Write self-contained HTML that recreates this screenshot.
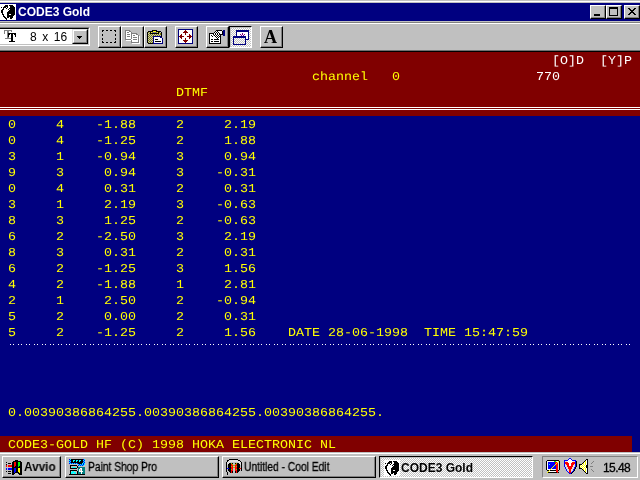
<!DOCTYPE html>
<html>
<head>
<meta charset="utf-8">
<title>CODE3 Gold</title>
<style>
html,body{margin:0;padding:0;}
body{width:640px;height:480px;overflow:hidden;background:#c0c0c0;position:relative;font-family:"Liberation Sans",sans-serif;font-size:12px;color:#000;}
.abs{position:absolute;}
#topb1{left:0;top:1px;width:640px;height:1px;background:#fff;}
#title{left:0;top:3px;width:640px;height:18px;background:#000080;}
#ticonbg{left:0;top:4px;width:16px;height:16px;background:#fff;}
#ttext{will-change:transform;left:18px;top:3px;height:18px;line-height:18px;color:#fff;font-weight:bold;font-size:12px;white-space:pre;}
.cb{position:absolute;top:5px;width:16px;height:14px;background:#c0c0c0;box-sizing:border-box;border-top:1px solid #fff;border-left:1px solid #fff;border-right:1px solid #000;border-bottom:1px solid #000;}
.cb:after{content:"";position:absolute;left:0;top:0;right:0;bottom:0;border-right:1px solid #808080;border-bottom:1px solid #808080;}
.cb i{position:absolute;background:#000;}
#l22{left:0;top:22px;width:640px;height:1px;background:#808080;}
#l23{left:0;top:23px;width:640px;height:1px;background:#fff;}
#l50{left:0;top:50px;width:640px;height:1px;background:#707070;}
#l51{left:0;top:51px;width:640px;height:1px;background:#000;}
/* combobox */
#combo{left:-2px;top:27px;width:92px;height:19px;box-sizing:border-box;background:#fff;border-top:1px solid #808080;border-left:1px solid #808080;border-right:1px solid #fff;border-bottom:1px solid #fff;}
#combo:after{content:"";position:absolute;left:0;top:0;right:0;bottom:0;border-top:1px solid #000;border-left:1px solid #000;border-right:1px solid #c0c0c0;border-bottom:1px solid #c0c0c0;}
#ctext{will-change:transform;left:30px;top:30px;height:15px;line-height:15px;font-size:12px;word-spacing:2.2px;white-space:pre;}
#cdrop{left:72px;top:29px;width:16px;height:15px;box-sizing:border-box;background:#c0c0c0;border-top:1px solid #dfdfdf;border-left:1px solid #dfdfdf;border-right:1px solid #000;border-bottom:1px solid #000;z-index:2;}
#cdrop:after{content:"";position:absolute;left:0;top:0;right:0;bottom:0;border-top:1px solid #fff;border-left:1px solid #fff;border-right:1px solid #808080;border-bottom:1px solid #808080;}
#cdrop i{position:absolute;background:#000;height:1px;}
.tb{position:absolute;top:26px;width:23px;height:22px;box-sizing:border-box;background:#c0c0c0;border-top:1px solid #fff;border-left:1px solid #fff;border-right:1px solid #000;border-bottom:1px solid #000;}
.tb:after{content:"";position:absolute;left:0;top:0;right:0;bottom:0;border-right:1px solid #808080;border-bottom:1px solid #808080;}
.tbp{position:absolute;top:26px;width:23px;height:22px;box-sizing:border-box;border-top:1px solid #000;border-left:1px solid #000;border-right:1px solid #fff;border-bottom:1px solid #fff;background:conic-gradient(#fff 25%,#c0c0c0 0 50%,#fff 0 75%,#c0c0c0 0) 0 0/2px 2px;}
.tbp:after{content:"";position:absolute;left:0;top:0;right:0;bottom:0;border-top:1px solid #c0c0c0;border-left:1px solid #c0c0c0;}
#fontA{will-change:transform;left:258.5px;top:26px;width:23px;height:22px;line-height:22px;text-align:center;font-family:"Liberation Serif",serif;font-weight:bold;font-size:18px;}
#dos{left:0;top:52px;width:640px;height:400px;background:#000080;overflow:hidden;}
.t{position:absolute;height:16px;line-height:16px;margin-top:2px;font-family:"Liberation Mono",monospace;font-size:13.33px;text-rendering:geometricPrecision;transform:scaleY(0.9);transform-origin:0 11px;white-space:pre;}
.y{color:#ffff00;}
.w{color:#ffffff;}
#dtxt{left:0;top:0;width:640px;height:400px;will-change:transform;}
#hdr{left:0;top:0;width:640px;height:64px;background:#800000;}
#dl1{left:0;top:55px;width:640px;height:1px;background:#fff;}
#dl2{left:0;top:57px;width:640px;height:1px;background:#fff;}
#dots{left:8px;top:292px;width:624px;height:1px;background:linear-gradient(90deg,transparent 0 2px,#fff 2px 3px,transparent 3px 5px,#fff 5px 6px,transparent 6px 8px) 0 0/8px 1px;}
#ftr{left:0;top:384px;width:632px;height:16px;background:#800000;}
#task{left:0;top:452px;width:640px;height:28px;background:#c0c0c0;}
#task1{left:0;top:453px;width:640px;height:1px;background:#fff;}
.btn{position:absolute;top:456px;height:22px;box-sizing:border-box;background:#c0c0c0;border-top:1px solid #fff;border-left:1px solid #fff;border-right:1px solid #000;border-bottom:1px solid #000;}
.btn:after{content:"";position:absolute;left:0;top:0;right:0;bottom:0;border-right:1px solid #808080;border-bottom:1px solid #808080;}
.btnp{position:absolute;top:456px;height:22px;box-sizing:border-box;border-top:1px solid #000;border-left:1px solid #000;border-right:1px solid #fff;border-bottom:1px solid #fff;background:conic-gradient(#fff 25%,#c0c0c0 0 50%,#fff 0 75%,#c0c0c0 0) 0 0/2px 2px;}
.btnp:after{content:"";position:absolute;left:0;top:0;right:0;bottom:0;border-top:1px solid #c0c0c0;border-left:1px solid #c0c0c0;}
.lbl{will-change:transform;position:absolute;height:22px;line-height:22px;font-size:12px;white-space:pre;transform-origin:0 50%;}
.nar{transform:scaleX(0.855);-webkit-text-stroke:0.3px #000;}
#tray{left:542px;top:456px;width:96px;height:22px;box-sizing:border-box;border-top:1px solid #808080;border-left:1px solid #808080;border-right:1px solid #fff;border-bottom:1px solid #fff;}
</style>
</head>
<body>
<div class="abs" id="topb1"></div>
<div class="abs" id="title"></div>
<div class="abs" id="ticonbg"></div>
<svg class="abs" style="left:0px;top:4px" width="16" height="16" viewBox="0 0 16 16" shape-rendering="crispEdges"><rect x="5" y="1" width="3" height="1" fill="#000"/><rect x="9" y="1" width="4" height="1" fill="#000"/><rect x="4" y="2" width="4" height="1" fill="#000"/><rect x="10" y="2" width="4" height="1" fill="#000"/><rect x="1" y="3" width="1" height="1" fill="#000"/><rect x="3" y="3" width="3" height="1" fill="#000"/><rect x="7" y="3" width="1" height="1" fill="#000"/><rect x="10" y="3" width="5" height="1" fill="#000"/><rect x="3" y="4" width="1" height="1" fill="#000"/><rect x="6" y="4" width="1" height="1" fill="#000"/><rect x="9" y="4" width="6" height="1" fill="#000"/><rect x="2" y="5" width="2" height="1" fill="#000"/><rect x="8" y="5" width="1" height="1" fill="#000"/><rect x="10" y="5" width="5" height="1" fill="#000"/><rect x="1" y="6" width="2" height="1" fill="#000"/><rect x="9" y="6" width="6" height="1" fill="#000"/><rect x="1" y="7" width="2" height="1" fill="#000"/><rect x="8" y="7" width="7" height="1" fill="#000"/><rect x="1" y="8" width="2" height="1" fill="#000"/><rect x="7" y="8" width="8" height="1" fill="#000"/><rect x="2" y="9" width="1" height="1" fill="#000"/><rect x="7" y="9" width="8" height="1" fill="#000"/><rect x="2" y="10" width="2" height="1" fill="#000"/><rect x="7" y="10" width="2" height="1" fill="#000"/><rect x="9" y="10" width="2" height="1" fill="#fff"/><rect x="11" y="10" width="4" height="1" fill="#000"/><rect x="3" y="11" width="1" height="1" fill="#000"/><rect x="7" y="11" width="7" height="1" fill="#000"/><rect x="3" y="12" width="2" height="1" fill="#000"/><rect x="7" y="12" width="6" height="1" fill="#000"/><rect x="4" y="13" width="2" height="1" fill="#000"/><rect x="7" y="13" width="2" height="1" fill="#000"/><rect x="10" y="13" width="3" height="1" fill="#000"/><rect x="5" y="14" width="2" height="1" fill="#000"/><rect x="10" y="14" width="2" height="1" fill="#000"/><rect x="6" y="15" width="1" height="1" fill="#000"/></svg>
<div class="abs" id="ttext">CODE3 Gold</div>
<div class="cb" style="left:590px"><i style="left:3px;top:8px;width:6px;height:2px"></i></div>
<div class="cb" style="left:606px"><i style="left:2px;top:1px;width:9px;height:2px"></i><i style="left:2px;top:9px;width:9px;height:1px"></i><i style="left:2px;top:1px;width:1px;height:9px"></i><i style="left:10px;top:1px;width:1px;height:9px"></i></div>
<div class="cb" style="left:624px"><svg class="abs" style="left:3px;top:2px" width="8" height="7" viewBox="0 0 8 7" shape-rendering="crispEdges"><path d="M0 0h2v1h1v1h2v-1h1v-1h2v1h-1v1h-1v1h-1v1h1v1h1v1h1v1h-2v-1h-1v-1h-2v1h-1v1h-2v-1h1v-1h1v-1h1v-1h-1v-1h-1v-1h-1z" fill="#000"/></svg></div>
<div class="abs" id="l22"></div>
<div class="abs" id="l23"></div>
<div class="abs" id="combo"></div>
<svg class="abs" style="left:4px;top:30px" width="12" height="12" viewBox="0 0 12 12" shape-rendering="crispEdges"><rect x="0" y="0" width="8" height="1" fill="#808080"/><rect x="0" y="1" width="1" height="1" fill="#808080"/><rect x="3" y="1" width="2" height="1" fill="#808080"/><rect x="7" y="1" width="1" height="1" fill="#808080"/><rect x="0" y="2" width="1" height="1" fill="#808080"/><rect x="3" y="2" width="2" height="1" fill="#808080"/><rect x="0" y="3" width="1" height="1" fill="#808080"/><rect x="3" y="3" width="1" height="1" fill="#808080"/><rect x="4" y="3" width="8" height="1" fill="#000"/><rect x="3" y="4" width="1" height="1" fill="#808080"/><rect x="4" y="4" width="2" height="1" fill="#000"/><rect x="7" y="4" width="2" height="1" fill="#000"/><rect x="10" y="4" width="2" height="1" fill="#000"/><rect x="3" y="5" width="1" height="1" fill="#808080"/><rect x="4" y="5" width="1" height="1" fill="#000"/><rect x="7" y="5" width="2" height="1" fill="#000"/><rect x="11" y="5" width="1" height="1" fill="#000"/><rect x="3" y="6" width="1" height="1" fill="#808080"/><rect x="4" y="6" width="1" height="1" fill="#000"/><rect x="7" y="6" width="2" height="1" fill="#000"/><rect x="11" y="6" width="1" height="1" fill="#000"/><rect x="3" y="7" width="2" height="1" fill="#808080"/><rect x="7" y="7" width="2" height="1" fill="#000"/><rect x="1" y="8" width="6" height="1" fill="#808080"/><rect x="7" y="8" width="2" height="1" fill="#000"/><rect x="7" y="9" width="2" height="1" fill="#000"/><rect x="7" y="10" width="2" height="1" fill="#000"/><rect x="5" y="11" width="6" height="1" fill="#000"/></svg>
<div class="abs" id="ctext">8 x 16</div>
<div class="abs" id="cdrop"><i style="left:4px;top:6px;width:5px"></i><i style="left:5px;top:7px;width:3px"></i><i style="left:6px;top:8px;width:1px"></i></div>
<div class="tb" style="left:98px"></div>
<svg class="abs" style="left:102px;top:30px" width="14" height="13" viewBox="0 0 14 13" shape-rendering="crispEdges"><path d="M0 0h2v1h-2zM4 0h2v1h-2zM8 0h2v1h-2zM12 0h2v1h-2zM0 12h2v1h-2zM4 12h2v1h-2zM8 12h2v1h-2zM12 12h2v1h-2zM0 0h1v2h-1zM0 4h1v2h-1zM0 8h1v2h-1zM0 11h1v2h-1zM13 0h1v2h-1zM13 4h1v2h-1zM13 8h1v2h-1zM13 11h1v2h-1z" fill="#000"/></svg>
<div class="tb" style="left:121px"></div>
<svg class="abs" style="left:125px;top:30px" width="16" height="14" viewBox="0 0 16 14" shape-rendering="crispEdges"><rect x="0" y="0" width="5" height="1" fill="#808080"/><rect x="0" y="1" width="1" height="1" fill="#808080"/><rect x="1" y="1" width="3" height="1" fill="#fff"/><rect x="4" y="1" width="2" height="1" fill="#808080"/><rect x="0" y="2" width="1" height="1" fill="#808080"/><rect x="1" y="2" width="1" height="1" fill="#fff"/><rect x="2" y="2" width="2" height="1" fill="#808080"/><rect x="4" y="2" width="2" height="1" fill="#fff"/><rect x="6" y="2" width="1" height="1" fill="#808080"/><rect x="0" y="3" width="1" height="1" fill="#808080"/><rect x="1" y="3" width="5" height="1" fill="#fff"/><rect x="6" y="3" width="6" height="1" fill="#808080"/><rect x="0" y="4" width="1" height="1" fill="#808080"/><rect x="1" y="4" width="1" height="1" fill="#fff"/><rect x="2" y="4" width="3" height="1" fill="#808080"/><rect x="5" y="4" width="1" height="1" fill="#fff"/><rect x="6" y="4" width="1" height="1" fill="#808080"/><rect x="7" y="4" width="4" height="1" fill="#fff"/><rect x="11" y="4" width="2" height="1" fill="#808080"/><rect x="0" y="5" width="1" height="1" fill="#808080"/><rect x="1" y="5" width="5" height="1" fill="#fff"/><rect x="6" y="5" width="1" height="1" fill="#808080"/><rect x="7" y="5" width="1" height="1" fill="#fff"/><rect x="8" y="5" width="2" height="1" fill="#808080"/><rect x="10" y="5" width="3" height="1" fill="#fff"/><rect x="13" y="5" width="1" height="1" fill="#808080"/><rect x="0" y="6" width="1" height="1" fill="#808080"/><rect x="1" y="6" width="1" height="1" fill="#fff"/><rect x="2" y="6" width="3" height="1" fill="#808080"/><rect x="5" y="6" width="1" height="1" fill="#fff"/><rect x="6" y="6" width="1" height="1" fill="#808080"/><rect x="7" y="6" width="6" height="1" fill="#fff"/><rect x="13" y="6" width="1" height="1" fill="#808080"/><rect x="14" y="6" width="1" height="1" fill="#fff"/><rect x="0" y="7" width="1" height="1" fill="#808080"/><rect x="1" y="7" width="5" height="1" fill="#fff"/><rect x="6" y="7" width="1" height="1" fill="#808080"/><rect x="7" y="7" width="1" height="1" fill="#fff"/><rect x="8" y="7" width="4" height="1" fill="#808080"/><rect x="12" y="7" width="1" height="1" fill="#fff"/><rect x="13" y="7" width="1" height="1" fill="#808080"/><rect x="14" y="7" width="1" height="1" fill="#fff"/><rect x="0" y="8" width="1" height="1" fill="#808080"/><rect x="1" y="8" width="5" height="1" fill="#fff"/><rect x="6" y="8" width="1" height="1" fill="#808080"/><rect x="7" y="8" width="6" height="1" fill="#fff"/><rect x="13" y="8" width="1" height="1" fill="#808080"/><rect x="14" y="8" width="1" height="1" fill="#fff"/><rect x="0" y="9" width="6" height="1" fill="#808080"/><rect x="6" y="9" width="2" height="1" fill="#fff"/><rect x="8" y="9" width="4" height="1" fill="#808080"/><rect x="12" y="9" width="1" height="1" fill="#fff"/><rect x="13" y="9" width="1" height="1" fill="#808080"/><rect x="14" y="9" width="1" height="1" fill="#fff"/><rect x="1" y="10" width="5" height="1" fill="#fff"/><rect x="6" y="10" width="1" height="1" fill="#808080"/><rect x="7" y="10" width="6" height="1" fill="#fff"/><rect x="13" y="10" width="1" height="1" fill="#808080"/><rect x="14" y="10" width="1" height="1" fill="#fff"/><rect x="6" y="11" width="1" height="1" fill="#808080"/><rect x="7" y="11" width="6" height="1" fill="#fff"/><rect x="13" y="11" width="1" height="1" fill="#808080"/><rect x="14" y="11" width="1" height="1" fill="#fff"/><rect x="6" y="12" width="8" height="1" fill="#808080"/><rect x="14" y="12" width="1" height="1" fill="#fff"/><rect x="7" y="13" width="8" height="1" fill="#fff"/></svg>
<div class="tb" style="left:144px"></div>
<svg class="abs" style="left:147px;top:30px" width="16" height="14" viewBox="0 0 16 14" shape-rendering="crispEdges"><rect x="5" y="0" width="5" height="1" fill="#000"/><rect x="1" y="1" width="5" height="1" fill="#000"/><rect x="6" y="1" width="3" height="1" fill="#ffff00"/><rect x="9" y="1" width="5" height="1" fill="#000"/><rect x="0" y="2" width="1" height="1" fill="#000"/><rect x="1" y="2" width="1" height="1" fill="#808000"/><rect x="2" y="2" width="1" height="1" fill="#c0c0c0"/><rect x="3" y="2" width="1" height="1" fill="#000"/><rect x="4" y="2" width="1" height="1" fill="#ffff00"/><rect x="5" y="2" width="5" height="1" fill="#808080"/><rect x="10" y="2" width="1" height="1" fill="#ffff00"/><rect x="11" y="2" width="1" height="1" fill="#000"/><rect x="12" y="2" width="1" height="1" fill="#808000"/><rect x="13" y="2" width="1" height="1" fill="#c0c0c0"/><rect x="14" y="2" width="1" height="1" fill="#000"/><rect x="0" y="3" width="1" height="1" fill="#000"/><rect x="1" y="3" width="1" height="1" fill="#c0c0c0"/><rect x="2" y="3" width="1" height="1" fill="#808000"/><rect x="3" y="3" width="9" height="1" fill="#000"/><rect x="12" y="3" width="1" height="1" fill="#c0c0c0"/><rect x="13" y="3" width="1" height="1" fill="#808000"/><rect x="14" y="3" width="1" height="1" fill="#000"/><rect x="0" y="4" width="1" height="1" fill="#000"/><rect x="1" y="4" width="1" height="1" fill="#808000"/><rect x="2" y="4" width="1" height="1" fill="#c0c0c0"/><rect x="3" y="4" width="1" height="1" fill="#808000"/><rect x="4" y="4" width="1" height="1" fill="#c0c0c0"/><rect x="5" y="4" width="1" height="1" fill="#808000"/><rect x="6" y="4" width="1" height="1" fill="#c0c0c0"/><rect x="7" y="4" width="1" height="1" fill="#808000"/><rect x="8" y="4" width="1" height="1" fill="#c0c0c0"/><rect x="9" y="4" width="1" height="1" fill="#808000"/><rect x="10" y="4" width="1" height="1" fill="#c0c0c0"/><rect x="11" y="4" width="1" height="1" fill="#808000"/><rect x="12" y="4" width="1" height="1" fill="#c0c0c0"/><rect x="13" y="4" width="1" height="1" fill="#808000"/><rect x="14" y="4" width="1" height="1" fill="#000"/><rect x="0" y="5" width="1" height="1" fill="#000"/><rect x="1" y="5" width="1" height="1" fill="#c0c0c0"/><rect x="2" y="5" width="1" height="1" fill="#808000"/><rect x="3" y="5" width="1" height="1" fill="#c0c0c0"/><rect x="4" y="5" width="1" height="1" fill="#808000"/><rect x="5" y="5" width="1" height="1" fill="#c0c0c0"/><rect x="6" y="5" width="1" height="1" fill="#808000"/><rect x="7" y="5" width="1" height="1" fill="#c0c0c0"/><rect x="8" y="5" width="1" height="1" fill="#808000"/><rect x="9" y="5" width="1" height="1" fill="#c0c0c0"/><rect x="10" y="5" width="1" height="1" fill="#808000"/><rect x="11" y="5" width="1" height="1" fill="#c0c0c0"/><rect x="12" y="5" width="1" height="1" fill="#808000"/><rect x="13" y="5" width="1" height="1" fill="#c0c0c0"/><rect x="14" y="5" width="1" height="1" fill="#000"/><rect x="0" y="6" width="1" height="1" fill="#000"/><rect x="1" y="6" width="1" height="1" fill="#808000"/><rect x="2" y="6" width="1" height="1" fill="#c0c0c0"/><rect x="3" y="6" width="1" height="1" fill="#808000"/><rect x="4" y="6" width="1" height="1" fill="#c0c0c0"/><rect x="5" y="6" width="1" height="1" fill="#808000"/><rect x="6" y="6" width="8" height="1" fill="#000080"/><rect x="14" y="6" width="1" height="1" fill="#000"/><rect x="0" y="7" width="1" height="1" fill="#000"/><rect x="1" y="7" width="1" height="1" fill="#c0c0c0"/><rect x="2" y="7" width="1" height="1" fill="#808000"/><rect x="3" y="7" width="1" height="1" fill="#c0c0c0"/><rect x="4" y="7" width="1" height="1" fill="#808000"/><rect x="5" y="7" width="1" height="1" fill="#c0c0c0"/><rect x="6" y="7" width="1" height="1" fill="#000080"/><rect x="7" y="7" width="6" height="1" fill="#fff"/><rect x="13" y="7" width="2" height="1" fill="#000080"/><rect x="0" y="8" width="1" height="1" fill="#000"/><rect x="1" y="8" width="1" height="1" fill="#808000"/><rect x="2" y="8" width="1" height="1" fill="#c0c0c0"/><rect x="3" y="8" width="1" height="1" fill="#808000"/><rect x="4" y="8" width="1" height="1" fill="#c0c0c0"/><rect x="5" y="8" width="1" height="1" fill="#808000"/><rect x="6" y="8" width="1" height="1" fill="#000080"/><rect x="7" y="8" width="8" height="1" fill="#fff"/><rect x="15" y="8" width="1" height="1" fill="#000080"/><rect x="0" y="9" width="1" height="1" fill="#000"/><rect x="1" y="9" width="1" height="1" fill="#c0c0c0"/><rect x="2" y="9" width="1" height="1" fill="#808000"/><rect x="3" y="9" width="1" height="1" fill="#c0c0c0"/><rect x="4" y="9" width="1" height="1" fill="#808000"/><rect x="5" y="9" width="1" height="1" fill="#c0c0c0"/><rect x="6" y="9" width="1" height="1" fill="#000080"/><rect x="7" y="9" width="1" height="1" fill="#fff"/><rect x="8" y="9" width="3" height="1" fill="#000"/><rect x="11" y="9" width="4" height="1" fill="#fff"/><rect x="15" y="9" width="1" height="1" fill="#000080"/><rect x="0" y="10" width="1" height="1" fill="#000"/><rect x="1" y="10" width="1" height="1" fill="#808000"/><rect x="2" y="10" width="1" height="1" fill="#c0c0c0"/><rect x="3" y="10" width="1" height="1" fill="#808000"/><rect x="4" y="10" width="1" height="1" fill="#c0c0c0"/><rect x="5" y="10" width="1" height="1" fill="#808000"/><rect x="6" y="10" width="1" height="1" fill="#000080"/><rect x="7" y="10" width="8" height="1" fill="#fff"/><rect x="15" y="10" width="1" height="1" fill="#000080"/><rect x="0" y="11" width="1" height="1" fill="#000"/><rect x="1" y="11" width="1" height="1" fill="#c0c0c0"/><rect x="2" y="11" width="1" height="1" fill="#808000"/><rect x="3" y="11" width="1" height="1" fill="#c0c0c0"/><rect x="4" y="11" width="1" height="1" fill="#808000"/><rect x="5" y="11" width="1" height="1" fill="#c0c0c0"/><rect x="6" y="11" width="1" height="1" fill="#000080"/><rect x="7" y="11" width="1" height="1" fill="#fff"/><rect x="8" y="11" width="6" height="1" fill="#000"/><rect x="14" y="11" width="1" height="1" fill="#fff"/><rect x="15" y="11" width="1" height="1" fill="#000080"/><rect x="0" y="12" width="1" height="1" fill="#000"/><rect x="1" y="12" width="1" height="1" fill="#808000"/><rect x="2" y="12" width="1" height="1" fill="#c0c0c0"/><rect x="3" y="12" width="1" height="1" fill="#808000"/><rect x="4" y="12" width="1" height="1" fill="#c0c0c0"/><rect x="5" y="12" width="1" height="1" fill="#808000"/><rect x="6" y="12" width="1" height="1" fill="#000080"/><rect x="7" y="12" width="8" height="1" fill="#fff"/><rect x="15" y="12" width="1" height="1" fill="#000080"/><rect x="1" y="13" width="5" height="1" fill="#000"/><rect x="6" y="13" width="10" height="1" fill="#000080"/></svg>
<div class="tb" style="left:175px"></div>
<svg class="abs" style="left:178px;top:29px" width="15" height="15" viewBox="0 0 15 15" shape-rendering="crispEdges"><rect x="0" y="0" width="15" height="1" fill="#000080"/><rect x="0" y="1" width="1" height="1" fill="#000080"/><rect x="1" y="1" width="6" height="1" fill="#fff"/><rect x="7" y="1" width="1" height="1" fill="#800000"/><rect x="8" y="1" width="6" height="1" fill="#fff"/><rect x="14" y="1" width="1" height="1" fill="#000080"/><rect x="0" y="2" width="1" height="1" fill="#000080"/><rect x="1" y="2" width="5" height="1" fill="#fff"/><rect x="6" y="2" width="3" height="1" fill="#800000"/><rect x="9" y="2" width="5" height="1" fill="#fff"/><rect x="14" y="2" width="1" height="1" fill="#000080"/><rect x="0" y="3" width="1" height="1" fill="#000080"/><rect x="1" y="3" width="4" height="1" fill="#fff"/><rect x="5" y="3" width="5" height="1" fill="#800000"/><rect x="10" y="3" width="4" height="1" fill="#fff"/><rect x="14" y="3" width="1" height="1" fill="#000080"/><rect x="0" y="4" width="1" height="1" fill="#000080"/><rect x="1" y="4" width="6" height="1" fill="#fff"/><rect x="7" y="4" width="1" height="1" fill="#800000"/><rect x="8" y="4" width="6" height="1" fill="#fff"/><rect x="14" y="4" width="1" height="1" fill="#000080"/><rect x="0" y="5" width="1" height="1" fill="#000080"/><rect x="1" y="5" width="2" height="1" fill="#fff"/><rect x="3" y="5" width="1" height="1" fill="#800000"/><rect x="4" y="5" width="3" height="1" fill="#fff"/><rect x="7" y="5" width="1" height="1" fill="#800000"/><rect x="8" y="5" width="3" height="1" fill="#fff"/><rect x="11" y="5" width="1" height="1" fill="#800000"/><rect x="12" y="5" width="2" height="1" fill="#fff"/><rect x="14" y="5" width="1" height="1" fill="#000080"/><rect x="0" y="6" width="1" height="1" fill="#000080"/><rect x="1" y="6" width="1" height="1" fill="#fff"/><rect x="2" y="6" width="2" height="1" fill="#800000"/><rect x="4" y="6" width="7" height="1" fill="#fff"/><rect x="11" y="6" width="2" height="1" fill="#800000"/><rect x="13" y="6" width="1" height="1" fill="#fff"/><rect x="14" y="6" width="1" height="1" fill="#000080"/><rect x="0" y="7" width="1" height="1" fill="#000080"/><rect x="1" y="7" width="5" height="1" fill="#800000"/><rect x="6" y="7" width="3" height="1" fill="#fff"/><rect x="9" y="7" width="5" height="1" fill="#800000"/><rect x="14" y="7" width="1" height="1" fill="#000080"/><rect x="0" y="8" width="1" height="1" fill="#000080"/><rect x="1" y="8" width="1" height="1" fill="#fff"/><rect x="2" y="8" width="2" height="1" fill="#800000"/><rect x="4" y="8" width="7" height="1" fill="#fff"/><rect x="11" y="8" width="2" height="1" fill="#800000"/><rect x="13" y="8" width="1" height="1" fill="#fff"/><rect x="14" y="8" width="1" height="1" fill="#000080"/><rect x="0" y="9" width="1" height="1" fill="#000080"/><rect x="1" y="9" width="2" height="1" fill="#fff"/><rect x="3" y="9" width="1" height="1" fill="#800000"/><rect x="4" y="9" width="3" height="1" fill="#fff"/><rect x="7" y="9" width="1" height="1" fill="#800000"/><rect x="8" y="9" width="3" height="1" fill="#fff"/><rect x="11" y="9" width="1" height="1" fill="#800000"/><rect x="12" y="9" width="2" height="1" fill="#fff"/><rect x="14" y="9" width="1" height="1" fill="#000080"/><rect x="0" y="10" width="1" height="1" fill="#000080"/><rect x="1" y="10" width="6" height="1" fill="#fff"/><rect x="7" y="10" width="1" height="1" fill="#800000"/><rect x="8" y="10" width="6" height="1" fill="#fff"/><rect x="14" y="10" width="1" height="1" fill="#000080"/><rect x="0" y="11" width="1" height="1" fill="#000080"/><rect x="1" y="11" width="4" height="1" fill="#fff"/><rect x="5" y="11" width="5" height="1" fill="#800000"/><rect x="10" y="11" width="4" height="1" fill="#fff"/><rect x="14" y="11" width="1" height="1" fill="#000080"/><rect x="0" y="12" width="1" height="1" fill="#000080"/><rect x="1" y="12" width="5" height="1" fill="#fff"/><rect x="6" y="12" width="3" height="1" fill="#800000"/><rect x="9" y="12" width="5" height="1" fill="#fff"/><rect x="14" y="12" width="1" height="1" fill="#000080"/><rect x="0" y="13" width="1" height="1" fill="#000080"/><rect x="1" y="13" width="6" height="1" fill="#fff"/><rect x="7" y="13" width="1" height="1" fill="#800000"/><rect x="8" y="13" width="6" height="1" fill="#fff"/><rect x="14" y="13" width="1" height="1" fill="#000080"/><rect x="0" y="14" width="15" height="1" fill="#000080"/></svg>
<div class="tb" style="left:206px"></div>
<svg class="abs" style="left:209px;top:30px" width="16" height="14" viewBox="0 0 16 14" shape-rendering="crispEdges"><rect x="7" y="0" width="6" height="1" fill="#000"/><rect x="14" y="0" width="2" height="1" fill="#000080"/><rect x="6" y="1" width="1" height="1" fill="#000"/><rect x="7" y="1" width="1" height="1" fill="#fff"/><rect x="8" y="1" width="1" height="1" fill="#000"/><rect x="9" y="1" width="4" height="1" fill="#fff"/><rect x="13" y="1" width="1" height="1" fill="#000"/><rect x="14" y="1" width="2" height="1" fill="#000080"/><rect x="5" y="2" width="1" height="1" fill="#000"/><rect x="6" y="2" width="1" height="1" fill="#fff"/><rect x="7" y="2" width="1" height="1" fill="#000"/><rect x="8" y="2" width="1" height="1" fill="#fff"/><rect x="9" y="2" width="1" height="1" fill="#000"/><rect x="10" y="2" width="3" height="1" fill="#fff"/><rect x="13" y="2" width="1" height="1" fill="#000"/><rect x="14" y="2" width="2" height="1" fill="#000080"/><rect x="0" y="3" width="5" height="1" fill="#000"/><rect x="5" y="3" width="1" height="1" fill="#fff"/><rect x="6" y="3" width="1" height="1" fill="#000"/><rect x="7" y="3" width="1" height="1" fill="#fff"/><rect x="8" y="3" width="1" height="1" fill="#000"/><rect x="9" y="3" width="1" height="1" fill="#fff"/><rect x="10" y="3" width="1" height="1" fill="#000"/><rect x="11" y="3" width="2" height="1" fill="#fff"/><rect x="13" y="3" width="1" height="1" fill="#000"/><rect x="14" y="3" width="2" height="1" fill="#000080"/><rect x="0" y="4" width="1" height="1" fill="#000"/><rect x="1" y="4" width="3" height="1" fill="#fff"/><rect x="4" y="4" width="1" height="1" fill="#000"/><rect x="5" y="4" width="1" height="1" fill="#fff"/><rect x="6" y="4" width="1" height="1" fill="#000"/><rect x="7" y="4" width="1" height="1" fill="#fff"/><rect x="8" y="4" width="1" height="1" fill="#000"/><rect x="9" y="4" width="1" height="1" fill="#fff"/><rect x="10" y="4" width="4" height="1" fill="#000"/><rect x="14" y="4" width="2" height="1" fill="#000080"/><rect x="0" y="5" width="1" height="1" fill="#000"/><rect x="1" y="5" width="1" height="1" fill="#fff"/><rect x="2" y="5" width="1" height="1" fill="#000"/><rect x="3" y="5" width="1" height="1" fill="#fff"/><rect x="5" y="5" width="1" height="1" fill="#000"/><rect x="6" y="5" width="1" height="1" fill="#fff"/><rect x="7" y="5" width="1" height="1" fill="#000"/><rect x="8" y="5" width="1" height="1" fill="#fff"/><rect x="9" y="5" width="1" height="1" fill="#000"/><rect x="10" y="5" width="1" height="1" fill="#fff"/><rect x="11" y="5" width="1" height="1" fill="#000"/><rect x="14" y="5" width="2" height="1" fill="#000080"/><rect x="0" y="6" width="1" height="1" fill="#000"/><rect x="1" y="6" width="2" height="1" fill="#fff"/><rect x="3" y="6" width="1" height="1" fill="#000"/><rect x="4" y="6" width="2" height="1" fill="#fff"/><rect x="6" y="6" width="1" height="1" fill="#000"/><rect x="7" y="6" width="1" height="1" fill="#fff"/><rect x="8" y="6" width="1" height="1" fill="#000"/><rect x="9" y="6" width="1" height="1" fill="#fff"/><rect x="10" y="6" width="2" height="1" fill="#000"/><rect x="0" y="7" width="1" height="1" fill="#000"/><rect x="1" y="7" width="6" height="1" fill="#fff"/><rect x="7" y="7" width="1" height="1" fill="#000"/><rect x="8" y="7" width="1" height="1" fill="#fff"/><rect x="9" y="7" width="1" height="1" fill="#000"/><rect x="10" y="7" width="1" height="1" fill="#fff"/><rect x="11" y="7" width="1" height="1" fill="#000"/><rect x="0" y="8" width="1" height="1" fill="#000"/><rect x="1" y="8" width="7" height="1" fill="#fff"/><rect x="8" y="8" width="1" height="1" fill="#000"/><rect x="9" y="8" width="2" height="1" fill="#fff"/><rect x="11" y="8" width="1" height="1" fill="#000"/><rect x="0" y="9" width="1" height="1" fill="#000"/><rect x="1" y="9" width="1" height="1" fill="#fff"/><rect x="2" y="9" width="2" height="1" fill="#000"/><rect x="4" y="9" width="1" height="1" fill="#fff"/><rect x="5" y="9" width="5" height="1" fill="#000"/><rect x="10" y="9" width="1" height="1" fill="#fff"/><rect x="11" y="9" width="1" height="1" fill="#000"/><rect x="0" y="10" width="1" height="1" fill="#000"/><rect x="1" y="10" width="10" height="1" fill="#fff"/><rect x="11" y="10" width="1" height="1" fill="#000"/><rect x="0" y="11" width="1" height="1" fill="#000"/><rect x="1" y="11" width="1" height="1" fill="#fff"/><rect x="2" y="11" width="2" height="1" fill="#000"/><rect x="4" y="11" width="1" height="1" fill="#fff"/><rect x="5" y="11" width="5" height="1" fill="#000"/><rect x="10" y="11" width="1" height="1" fill="#fff"/><rect x="11" y="11" width="1" height="1" fill="#000"/><rect x="0" y="12" width="1" height="1" fill="#000"/><rect x="1" y="12" width="10" height="1" fill="#fff"/><rect x="11" y="12" width="1" height="1" fill="#000"/><rect x="0" y="13" width="12" height="1" fill="#000"/></svg>
<div class="tbp" style="left:229px"></div>
<svg class="abs" style="left:233px;top:30px" width="16" height="15" viewBox="0 0 16 15" shape-rendering="crispEdges"><rect x="3" y="0" width="13" height="1" fill="#000080"/><rect x="3" y="1" width="13" height="1" fill="#000080"/><rect x="3" y="2" width="1" height="1" fill="#000080"/><rect x="4" y="2" width="11" height="1" fill="#fff"/><rect x="15" y="2" width="1" height="1" fill="#000080"/><rect x="3" y="3" width="1" height="1" fill="#000080"/><rect x="4" y="3" width="5" height="1" fill="#fff"/><rect x="9" y="3" width="1" height="1" fill="#800080"/><rect x="10" y="3" width="5" height="1" fill="#fff"/><rect x="15" y="3" width="1" height="1" fill="#000080"/><rect x="3" y="4" width="1" height="1" fill="#000080"/><rect x="4" y="4" width="3" height="1" fill="#fff"/><rect x="7" y="4" width="1" height="1" fill="#800080"/><rect x="8" y="4" width="1" height="1" fill="#fff"/><rect x="9" y="4" width="1" height="1" fill="#800080"/><rect x="10" y="4" width="1" height="1" fill="#fff"/><rect x="11" y="4" width="1" height="1" fill="#800080"/><rect x="12" y="4" width="3" height="1" fill="#fff"/><rect x="15" y="4" width="1" height="1" fill="#000080"/><rect x="3" y="5" width="1" height="1" fill="#000080"/><rect x="4" y="5" width="4" height="1" fill="#fff"/><rect x="8" y="5" width="1" height="1" fill="#800080"/><rect x="9" y="5" width="1" height="1" fill="#fff"/><rect x="10" y="5" width="1" height="1" fill="#800080"/><rect x="11" y="5" width="4" height="1" fill="#fff"/><rect x="15" y="5" width="1" height="1" fill="#000080"/><rect x="0" y="6" width="13" height="1" fill="#000080"/><rect x="13" y="6" width="2" height="1" fill="#fff"/><rect x="15" y="6" width="1" height="1" fill="#000080"/><rect x="0" y="7" width="13" height="1" fill="#000080"/><rect x="13" y="7" width="2" height="1" fill="#fff"/><rect x="15" y="7" width="1" height="1" fill="#000080"/><rect x="0" y="8" width="1" height="1" fill="#000080"/><rect x="12" y="8" width="1" height="1" fill="#000080"/><rect x="13" y="8" width="2" height="1" fill="#fff"/><rect x="15" y="8" width="1" height="1" fill="#000080"/><rect x="0" y="9" width="1" height="1" fill="#000080"/><rect x="12" y="9" width="4" height="1" fill="#000080"/><rect x="0" y="10" width="1" height="1" fill="#000080"/><rect x="12" y="10" width="1" height="1" fill="#000080"/><rect x="0" y="11" width="1" height="1" fill="#000080"/><rect x="12" y="11" width="1" height="1" fill="#000080"/><rect x="0" y="12" width="1" height="1" fill="#000080"/><rect x="12" y="12" width="1" height="1" fill="#000080"/><rect x="0" y="13" width="1" height="1" fill="#000080"/><rect x="12" y="13" width="1" height="1" fill="#000080"/><rect x="0" y="14" width="13" height="1" fill="#000080"/></svg>
<div class="tb" style="left:260px"></div>
<div class="abs" id="fontA">A</div>
<div class="abs" id="l50"></div>
<div class="abs" id="l51"></div>
<div class="abs" id="dos">
<div class="abs" id="hdr"></div>
<div class="abs" id="dl1"></div>
<div class="abs" id="dl2"></div>
<div class="abs" id="dots"></div>
<div class="abs" id="ftr"></div>
<div class="abs" id="dtxt">
<div class="t w" style="left:552px;top:0px">[O]D  [Y]P</div>
<div class="t y" style="left:312px;top:16px">channel   0</div>
<div class="t w" style="left:536px;top:16px">770</div>
<div class="t y" style="left:176px;top:32px">DTMF</div>
<div class="t y" style="left:0px;top:64px"> 0     4    -1.88     2     2.19</div>
<div class="t y" style="left:0px;top:80px"> 0     4    -1.25     2     1.88</div>
<div class="t y" style="left:0px;top:96px"> 3     1    -0.94     3     0.94</div>
<div class="t y" style="left:0px;top:112px"> 9     3     0.94     3    -0.31</div>
<div class="t y" style="left:0px;top:128px"> 0     4     0.31     2     0.31</div>
<div class="t y" style="left:0px;top:144px"> 3     1     2.19     3    -0.63</div>
<div class="t y" style="left:0px;top:160px"> 8     3     1.25     2    -0.63</div>
<div class="t y" style="left:0px;top:176px"> 6     2    -2.50     3     2.19</div>
<div class="t y" style="left:0px;top:192px"> 8     3     0.31     2     0.31</div>
<div class="t y" style="left:0px;top:208px"> 6     2    -1.25     3     1.56</div>
<div class="t y" style="left:0px;top:224px"> 4     2    -1.88     1     2.81</div>
<div class="t y" style="left:0px;top:240px"> 2     1     2.50     2    -0.94</div>
<div class="t y" style="left:0px;top:256px"> 5     2     0.00     2     0.31</div>
<div class="t y" style="left:0px;top:272px"> 5     2    -1.25     2     1.56    DATE 28-06-1998  TIME 15:47:59</div>
<div class="t y" style="left:8px;top:352px">0.00390386864255.00390386864255.00390386864255.</div>
<div class="t y" style="left:8px;top:384px">CODE3-GOLD HF (C) 1998 HOKA ELECTRONIC NL</div>
</div>
</div>
<div class="abs" id="task"></div>
<div class="abs" id="task1"></div>
<div class="btn" style="left:2px;width:59px"><span class="lbl" style="left:21px;top:-1px;font-weight:bold;transform:scaleX(0.98)">Avvio</span></div>
<svg class="abs" style="left:5px;top:460px" width="17" height="15" viewBox="0 0 17 15" shape-rendering="crispEdges"><rect x="10" y="0" width="3" height="1" fill="#000"/><rect x="8" y="1" width="8" height="1" fill="#000"/><rect x="1" y="2" width="1" height="1" fill="#000"/><rect x="7" y="2" width="2" height="1" fill="#000"/><rect x="9" y="2" width="2" height="1" fill="#ff0000"/><rect x="11" y="2" width="2" height="1" fill="#000"/><rect x="13" y="2" width="2" height="1" fill="#00ff00"/><rect x="15" y="2" width="2" height="1" fill="#000"/><rect x="3" y="3" width="3" height="1" fill="#000"/><rect x="7" y="3" width="2" height="1" fill="#000"/><rect x="9" y="3" width="2" height="1" fill="#ff0000"/><rect x="11" y="3" width="2" height="1" fill="#000"/><rect x="13" y="3" width="2" height="1" fill="#00ff00"/><rect x="15" y="3" width="2" height="1" fill="#000"/><rect x="1" y="4" width="1" height="1" fill="#000"/><rect x="7" y="4" width="2" height="1" fill="#000"/><rect x="9" y="4" width="2" height="1" fill="#ff0000"/><rect x="11" y="4" width="2" height="1" fill="#000"/><rect x="13" y="4" width="2" height="1" fill="#00ff00"/><rect x="15" y="4" width="2" height="1" fill="#000"/><rect x="1" y="5" width="1" height="1" fill="#ff0000"/><rect x="3" y="5" width="4" height="1" fill="#ff0000"/><rect x="7" y="5" width="2" height="1" fill="#000"/><rect x="9" y="5" width="2" height="1" fill="#ff0000"/><rect x="11" y="5" width="2" height="1" fill="#000"/><rect x="13" y="5" width="2" height="1" fill="#00ff00"/><rect x="15" y="5" width="2" height="1" fill="#000"/><rect x="1" y="6" width="1" height="1" fill="#ff0000"/><rect x="3" y="6" width="4" height="1" fill="#ff0000"/><rect x="7" y="6" width="2" height="1" fill="#000"/><rect x="9" y="6" width="1" height="1" fill="#ff0000"/><rect x="10" y="6" width="3" height="1" fill="#000"/><rect x="13" y="6" width="1" height="1" fill="#00ff00"/><rect x="14" y="6" width="3" height="1" fill="#000"/><rect x="7" y="7" width="10" height="1" fill="#000"/><rect x="1" y="8" width="1" height="1" fill="#0000ff"/><rect x="3" y="8" width="4" height="1" fill="#0000ff"/><rect x="7" y="8" width="2" height="1" fill="#000"/><rect x="9" y="8" width="2" height="1" fill="#0000ff"/><rect x="11" y="8" width="2" height="1" fill="#000"/><rect x="13" y="8" width="2" height="1" fill="#ffff00"/><rect x="15" y="8" width="2" height="1" fill="#000"/><rect x="1" y="9" width="1" height="1" fill="#0000ff"/><rect x="3" y="9" width="4" height="1" fill="#0000ff"/><rect x="7" y="9" width="2" height="1" fill="#000"/><rect x="9" y="9" width="2" height="1" fill="#0000ff"/><rect x="11" y="9" width="2" height="1" fill="#000"/><rect x="13" y="9" width="2" height="1" fill="#ffff00"/><rect x="15" y="9" width="2" height="1" fill="#000"/><rect x="7" y="10" width="2" height="1" fill="#000"/><rect x="9" y="10" width="2" height="1" fill="#0000ff"/><rect x="11" y="10" width="2" height="1" fill="#000"/><rect x="13" y="10" width="2" height="1" fill="#ffff00"/><rect x="15" y="10" width="2" height="1" fill="#000"/><rect x="1" y="11" width="1" height="1" fill="#000"/><rect x="3" y="11" width="3" height="1" fill="#000"/><rect x="7" y="11" width="2" height="1" fill="#000"/><rect x="9" y="11" width="2" height="1" fill="#0000ff"/><rect x="11" y="11" width="2" height="1" fill="#000"/><rect x="13" y="11" width="2" height="1" fill="#ffff00"/><rect x="15" y="11" width="2" height="1" fill="#000"/><rect x="7" y="12" width="2" height="1" fill="#000"/><rect x="9" y="12" width="1" height="1" fill="#0000ff"/><rect x="10" y="12" width="4" height="1" fill="#000"/><rect x="14" y="12" width="1" height="1" fill="#ffff00"/><rect x="15" y="12" width="2" height="1" fill="#000"/><rect x="3" y="13" width="3" height="1" fill="#000"/><rect x="7" y="13" width="3" height="1" fill="#000"/><rect x="13" y="13" width="4" height="1" fill="#000"/><rect x="7" y="14" width="2" height="1" fill="#000"/><rect x="14" y="14" width="3" height="1" fill="#000"/></svg>
<div class="btn" style="left:65px;width:154px"><span class="lbl nar" style="left:22px;top:-1px">Paint Shop Pro</span></div>
<svg class="abs" style="left:69px;top:459px" width="16" height="16" viewBox="0 0 16 16" shape-rendering="crispEdges"><rect x="0" y="0" width="1" height="1" fill="#0000ff"/><rect x="1" y="0" width="1" height="1" fill="#00ffff"/><rect x="2" y="0" width="12" height="1" fill="#000"/><rect x="14" y="0" width="1" height="1" fill="#0000ff"/><rect x="15" y="0" width="1" height="1" fill="#00ffff"/><rect x="0" y="1" width="1" height="1" fill="#00ffff"/><rect x="1" y="1" width="1" height="1" fill="#0000ff"/><rect x="2" y="1" width="2" height="1" fill="#000"/><rect x="4" y="1" width="2" height="1" fill="#00ffff"/><rect x="6" y="1" width="1" height="1" fill="#000"/><rect x="7" y="1" width="2" height="1" fill="#00ffff"/><rect x="9" y="1" width="1" height="1" fill="#000"/><rect x="10" y="1" width="2" height="1" fill="#00ffff"/><rect x="12" y="1" width="2" height="1" fill="#000"/><rect x="14" y="1" width="1" height="1" fill="#00ffff"/><rect x="15" y="1" width="1" height="1" fill="#0000ff"/><rect x="0" y="2" width="1" height="1" fill="#0000ff"/><rect x="1" y="2" width="1" height="1" fill="#00ffff"/><rect x="2" y="2" width="2" height="1" fill="#000"/><rect x="4" y="2" width="1" height="1" fill="#00ffff"/><rect x="5" y="2" width="2" height="1" fill="#000"/><rect x="7" y="2" width="1" height="1" fill="#00ffff"/><rect x="8" y="2" width="2" height="1" fill="#000"/><rect x="10" y="2" width="1" height="1" fill="#00ffff"/><rect x="11" y="2" width="3" height="1" fill="#000"/><rect x="14" y="2" width="1" height="1" fill="#0000ff"/><rect x="15" y="2" width="1" height="1" fill="#00ffff"/><rect x="0" y="3" width="1" height="1" fill="#00ffff"/><rect x="1" y="3" width="1" height="1" fill="#0000ff"/><rect x="2" y="3" width="12" height="1" fill="#000"/><rect x="14" y="3" width="1" height="1" fill="#00ffff"/><rect x="15" y="3" width="1" height="1" fill="#0000ff"/><rect x="0" y="4" width="1" height="1" fill="#0000ff"/><rect x="1" y="4" width="1" height="1" fill="#00ffff"/><rect x="2" y="4" width="1" height="1" fill="#0000ff"/><rect x="3" y="4" width="1" height="1" fill="#00ffff"/><rect x="4" y="4" width="1" height="1" fill="#0000ff"/><rect x="5" y="4" width="1" height="1" fill="#00ffff"/><rect x="6" y="4" width="1" height="1" fill="#0000ff"/><rect x="7" y="4" width="1" height="1" fill="#00ffff"/><rect x="8" y="4" width="1" height="1" fill="#0000ff"/><rect x="9" y="4" width="4" height="1" fill="#000"/><rect x="13" y="4" width="1" height="1" fill="#00ffff"/><rect x="14" y="4" width="1" height="1" fill="#0000ff"/><rect x="15" y="4" width="1" height="1" fill="#00ffff"/><rect x="9" y="5" width="1" height="1" fill="#00ffff"/><rect x="10" y="5" width="1" height="1" fill="#0000ff"/><rect x="11" y="5" width="1" height="1" fill="#00ffff"/><rect x="12" y="5" width="1" height="1" fill="#0000ff"/><rect x="13" y="5" width="1" height="1" fill="#00ffff"/><rect x="14" y="5" width="1" height="1" fill="#0000ff"/><rect x="15" y="5" width="1" height="1" fill="#00ffff"/><rect x="1" y="6" width="7" height="1" fill="#000"/><rect x="9" y="6" width="1" height="1" fill="#0000ff"/><rect x="10" y="6" width="1" height="1" fill="#00ffff"/><rect x="11" y="6" width="1" height="1" fill="#0000ff"/><rect x="12" y="6" width="1" height="1" fill="#00ffff"/><rect x="13" y="6" width="1" height="1" fill="#0000ff"/><rect x="14" y="6" width="1" height="1" fill="#00ffff"/><rect x="1" y="7" width="1" height="1" fill="#000"/><rect x="8" y="7" width="1" height="1" fill="#000"/><rect x="1" y="8" width="1" height="1" fill="#000"/><rect x="3" y="8" width="4" height="1" fill="#00ffff"/><rect x="8" y="8" width="1" height="1" fill="#000"/><rect x="9" y="8" width="7" height="1" fill="#008080"/><rect x="1" y="9" width="7" height="1" fill="#000"/><rect x="9" y="9" width="2" height="1" fill="#008080"/><rect x="11" y="9" width="2" height="1" fill="#fff"/><rect x="13" y="9" width="3" height="1" fill="#008080"/><rect x="9" y="10" width="1" height="1" fill="#008080"/><rect x="10" y="10" width="1" height="1" fill="#fff"/><rect x="12" y="10" width="1" height="1" fill="#fff"/><rect x="13" y="10" width="3" height="1" fill="#008080"/><rect x="1" y="11" width="7" height="1" fill="#000"/><rect x="9" y="11" width="1" height="1" fill="#008080"/><rect x="10" y="11" width="1" height="1" fill="#fff"/><rect x="12" y="11" width="1" height="1" fill="#fff"/><rect x="13" y="11" width="3" height="1" fill="#008080"/><rect x="1" y="12" width="1" height="1" fill="#000"/><rect x="3" y="12" width="2" height="1" fill="#00ffff"/><rect x="8" y="12" width="1" height="1" fill="#000"/><rect x="9" y="12" width="1" height="1" fill="#008080"/><rect x="10" y="12" width="4" height="1" fill="#fff"/><rect x="14" y="12" width="2" height="1" fill="#008080"/><rect x="1" y="13" width="1" height="1" fill="#000"/><rect x="2" y="13" width="5" height="1" fill="#00ffff"/><rect x="8" y="13" width="1" height="1" fill="#000"/><rect x="9" y="13" width="3" height="1" fill="#008080"/><rect x="12" y="13" width="1" height="1" fill="#fff"/><rect x="13" y="13" width="3" height="1" fill="#008080"/><rect x="1" y="14" width="1" height="1" fill="#000"/><rect x="2" y="14" width="2" height="1" fill="#00ffff"/><rect x="5" y="14" width="2" height="1" fill="#00ffff"/><rect x="8" y="14" width="1" height="1" fill="#000"/><rect x="9" y="14" width="3" height="1" fill="#008080"/><rect x="12" y="14" width="1" height="1" fill="#fff"/><rect x="13" y="14" width="3" height="1" fill="#008080"/><rect x="0" y="15" width="16" height="1" fill="#000"/></svg>
<div class="btn" style="left:222px;width:154px"><span class="lbl nar" style="left:21px;top:-1px">Untitled - Cool Edit</span></div>
<svg class="abs" style="left:226px;top:459px" width="16" height="16" viewBox="0 0 16 16" shape-rendering="crispEdges"><rect x="3" y="0" width="9" height="1" fill="#000"/><rect x="1" y="1" width="2" height="1" fill="#000"/><rect x="3" y="1" width="9" height="1" fill="#dfdfdf"/><rect x="12" y="1" width="2" height="1" fill="#000"/><rect x="1" y="2" width="1" height="1" fill="#000"/><rect x="2" y="2" width="12" height="1" fill="#dfdfdf"/><rect x="14" y="2" width="1" height="1" fill="#000"/><rect x="0" y="3" width="1" height="1" fill="#000"/><rect x="1" y="3" width="3" height="1" fill="#dfdfdf"/><rect x="4" y="3" width="8" height="1" fill="#c0c0c0"/><rect x="12" y="3" width="3" height="1" fill="#dfdfdf"/><rect x="15" y="3" width="1" height="1" fill="#000"/><rect x="0" y="4" width="1" height="1" fill="#000"/><rect x="1" y="4" width="2" height="1" fill="#dfdfdf"/><rect x="3" y="4" width="2" height="1" fill="#000"/><rect x="5" y="4" width="1" height="1" fill="#b0b000"/><rect x="6" y="4" width="1" height="1" fill="#000"/><rect x="7" y="4" width="2" height="1" fill="#c0c0c0"/><rect x="9" y="4" width="1" height="1" fill="#000"/><rect x="10" y="4" width="1" height="1" fill="#b0b000"/><rect x="11" y="4" width="2" height="1" fill="#000"/><rect x="13" y="4" width="2" height="1" fill="#dfdfdf"/><rect x="15" y="4" width="1" height="1" fill="#000"/><rect x="0" y="5" width="1" height="1" fill="#000"/><rect x="1" y="5" width="1" height="1" fill="#dfdfdf"/><rect x="2" y="5" width="3" height="1" fill="#000"/><rect x="5" y="5" width="1" height="1" fill="#ff0000"/><rect x="6" y="5" width="1" height="1" fill="#b0b000"/><rect x="7" y="5" width="2" height="1" fill="#c0c0c0"/><rect x="9" y="5" width="1" height="1" fill="#b0b000"/><rect x="10" y="5" width="1" height="1" fill="#ff0000"/><rect x="11" y="5" width="3" height="1" fill="#000"/><rect x="14" y="5" width="1" height="1" fill="#dfdfdf"/><rect x="15" y="5" width="1" height="1" fill="#000"/><rect x="0" y="6" width="1" height="1" fill="#000"/><rect x="2" y="6" width="3" height="1" fill="#000"/><rect x="5" y="6" width="2" height="1" fill="#ff0000"/><rect x="7" y="6" width="2" height="1" fill="#b0b000"/><rect x="9" y="6" width="2" height="1" fill="#ff0000"/><rect x="11" y="6" width="3" height="1" fill="#000"/><rect x="15" y="6" width="1" height="1" fill="#000"/><rect x="0" y="7" width="1" height="1" fill="#000"/><rect x="2" y="7" width="3" height="1" fill="#000"/><rect x="5" y="7" width="1" height="1" fill="#b0b000"/><rect x="6" y="7" width="1" height="1" fill="#ff0000"/><rect x="7" y="7" width="2" height="1" fill="#c0c0c0"/><rect x="9" y="7" width="1" height="1" fill="#ff0000"/><rect x="10" y="7" width="1" height="1" fill="#b0b000"/><rect x="11" y="7" width="3" height="1" fill="#000"/><rect x="15" y="7" width="1" height="1" fill="#000"/><rect x="0" y="8" width="1" height="1" fill="#000"/><rect x="2" y="8" width="3" height="1" fill="#000"/><rect x="5" y="8" width="2" height="1" fill="#ff0000"/><rect x="7" y="8" width="2" height="1" fill="#b0b000"/><rect x="9" y="8" width="2" height="1" fill="#ff0000"/><rect x="11" y="8" width="3" height="1" fill="#000"/><rect x="15" y="8" width="1" height="1" fill="#000"/><rect x="0" y="9" width="1" height="1" fill="#000"/><rect x="1" y="9" width="2" height="1" fill="#0000ff"/><rect x="3" y="9" width="2" height="1" fill="#000"/><rect x="5" y="9" width="2" height="1" fill="#ff0000"/><rect x="7" y="9" width="2" height="1" fill="#c0c0c0"/><rect x="9" y="9" width="2" height="1" fill="#ff0000"/><rect x="11" y="9" width="2" height="1" fill="#000"/><rect x="13" y="9" width="2" height="1" fill="#ff0000"/><rect x="15" y="9" width="1" height="1" fill="#000"/><rect x="0" y="10" width="1" height="1" fill="#000"/><rect x="2" y="10" width="3" height="1" fill="#000"/><rect x="5" y="10" width="1" height="1" fill="#b0b000"/><rect x="6" y="10" width="1" height="1" fill="#ff0000"/><rect x="7" y="10" width="2" height="1" fill="#c0c0c0"/><rect x="9" y="10" width="1" height="1" fill="#ff0000"/><rect x="10" y="10" width="1" height="1" fill="#b0b000"/><rect x="11" y="10" width="3" height="1" fill="#000"/><rect x="15" y="10" width="1" height="1" fill="#000"/><rect x="0" y="11" width="1" height="1" fill="#000"/><rect x="2" y="11" width="3" height="1" fill="#000"/><rect x="5" y="11" width="2" height="1" fill="#ff0000"/><rect x="7" y="11" width="2" height="1" fill="#c0c0c0"/><rect x="9" y="11" width="2" height="1" fill="#ff0000"/><rect x="11" y="11" width="3" height="1" fill="#000"/><rect x="15" y="11" width="1" height="1" fill="#000"/><rect x="0" y="12" width="1" height="1" fill="#000"/><rect x="3" y="12" width="2" height="1" fill="#000"/><rect x="5" y="12" width="1" height="1" fill="#ff0000"/><rect x="6" y="12" width="1" height="1" fill="#000"/><rect x="7" y="12" width="2" height="1" fill="#c0c0c0"/><rect x="9" y="12" width="1" height="1" fill="#000"/><rect x="10" y="12" width="1" height="1" fill="#ff0000"/><rect x="11" y="12" width="2" height="1" fill="#000"/><rect x="1" y="13" width="1" height="1" fill="#000"/><rect x="4" y="13" width="1" height="1" fill="#000"/><rect x="5" y="13" width="1" height="1" fill="#ff0000"/><rect x="6" y="13" width="1" height="1" fill="#000"/><rect x="9" y="13" width="1" height="1" fill="#000"/><rect x="10" y="13" width="1" height="1" fill="#ff0000"/><rect x="11" y="13" width="1" height="1" fill="#000"/><rect x="1" y="14" width="1" height="1" fill="#000"/><rect x="1" y="15" width="1" height="1" fill="#000"/></svg>
<div class="btnp" style="left:379px;width:154px"><span class="lbl" style="left:21px;top:0px;font-weight:bold">CODE3 Gold</span></div>
<div class="abs" style="left:384px;top:460px;width:16px;height:16px;background:#fff"></div>
<svg class="abs" style="left:384px;top:460px" width="16" height="16" viewBox="0 0 16 16" shape-rendering="crispEdges"><rect x="5" y="1" width="3" height="1" fill="#000"/><rect x="9" y="1" width="4" height="1" fill="#000"/><rect x="4" y="2" width="4" height="1" fill="#000"/><rect x="10" y="2" width="4" height="1" fill="#000"/><rect x="1" y="3" width="1" height="1" fill="#000"/><rect x="3" y="3" width="3" height="1" fill="#000"/><rect x="7" y="3" width="1" height="1" fill="#000"/><rect x="10" y="3" width="5" height="1" fill="#000"/><rect x="3" y="4" width="1" height="1" fill="#000"/><rect x="6" y="4" width="1" height="1" fill="#000"/><rect x="9" y="4" width="6" height="1" fill="#000"/><rect x="2" y="5" width="2" height="1" fill="#000"/><rect x="8" y="5" width="1" height="1" fill="#000"/><rect x="10" y="5" width="5" height="1" fill="#000"/><rect x="1" y="6" width="2" height="1" fill="#000"/><rect x="9" y="6" width="6" height="1" fill="#000"/><rect x="1" y="7" width="2" height="1" fill="#000"/><rect x="8" y="7" width="7" height="1" fill="#000"/><rect x="1" y="8" width="2" height="1" fill="#000"/><rect x="7" y="8" width="8" height="1" fill="#000"/><rect x="2" y="9" width="1" height="1" fill="#000"/><rect x="7" y="9" width="8" height="1" fill="#000"/><rect x="2" y="10" width="2" height="1" fill="#000"/><rect x="7" y="10" width="2" height="1" fill="#000"/><rect x="9" y="10" width="2" height="1" fill="#fff"/><rect x="11" y="10" width="4" height="1" fill="#000"/><rect x="3" y="11" width="1" height="1" fill="#000"/><rect x="7" y="11" width="7" height="1" fill="#000"/><rect x="3" y="12" width="2" height="1" fill="#000"/><rect x="7" y="12" width="6" height="1" fill="#000"/><rect x="4" y="13" width="2" height="1" fill="#000"/><rect x="7" y="13" width="2" height="1" fill="#000"/><rect x="10" y="13" width="3" height="1" fill="#000"/><rect x="5" y="14" width="2" height="1" fill="#000"/><rect x="10" y="14" width="2" height="1" fill="#000"/><rect x="6" y="15" width="1" height="1" fill="#000"/></svg>
<div class="abs" id="tray"></div>
<svg class="abs" style="left:546px;top:459px" width="16" height="15" viewBox="0 0 16 15" shape-rendering="crispEdges"><rect x="1" y="1" width="12" height="1" fill="#000"/><rect x="0" y="2" width="1" height="1" fill="#000"/><rect x="1" y="2" width="7" height="1" fill="#fff"/><rect x="8" y="2" width="2" height="1" fill="#00ff00"/><rect x="10" y="2" width="1" height="1" fill="#dfdfdf"/><rect x="11" y="2" width="1" height="1" fill="#fff"/><rect x="12" y="2" width="1" height="1" fill="#ffff00"/><rect x="13" y="2" width="1" height="1" fill="#000"/><rect x="0" y="3" width="1" height="1" fill="#000"/><rect x="1" y="3" width="1" height="1" fill="#fff"/><rect x="2" y="3" width="7" height="1" fill="#0000ff"/><rect x="9" y="3" width="2" height="1" fill="#ff0000"/><rect x="11" y="3" width="1" height="1" fill="#ffff00"/><rect x="12" y="3" width="1" height="1" fill="#dfdfdf"/><rect x="13" y="3" width="1" height="1" fill="#000"/><rect x="0" y="4" width="1" height="1" fill="#000"/><rect x="1" y="4" width="1" height="1" fill="#fff"/><rect x="2" y="4" width="7" height="1" fill="#0000ff"/><rect x="9" y="4" width="1" height="1" fill="#ff0000"/><rect x="10" y="4" width="1" height="1" fill="#ffff00"/><rect x="11" y="4" width="1" height="1" fill="#ff0000"/><rect x="12" y="4" width="1" height="1" fill="#dfdfdf"/><rect x="13" y="4" width="1" height="1" fill="#000"/><rect x="0" y="5" width="1" height="1" fill="#000"/><rect x="1" y="5" width="1" height="1" fill="#fff"/><rect x="2" y="5" width="1" height="1" fill="#0000ff"/><rect x="3" y="5" width="1" height="1" fill="#00ffff"/><rect x="4" y="5" width="5" height="1" fill="#0000ff"/><rect x="9" y="5" width="1" height="1" fill="#ffff00"/><rect x="10" y="5" width="2" height="1" fill="#ff0000"/><rect x="12" y="5" width="1" height="1" fill="#dfdfdf"/><rect x="13" y="5" width="1" height="1" fill="#000"/><rect x="0" y="6" width="1" height="1" fill="#000"/><rect x="1" y="6" width="1" height="1" fill="#fff"/><rect x="2" y="6" width="6" height="1" fill="#0000ff"/><rect x="8" y="6" width="1" height="1" fill="#ffff00"/><rect x="9" y="6" width="1" height="1" fill="#0000ff"/><rect x="10" y="6" width="2" height="1" fill="#ff0000"/><rect x="12" y="6" width="1" height="1" fill="#dfdfdf"/><rect x="13" y="6" width="1" height="1" fill="#000"/><rect x="0" y="7" width="1" height="1" fill="#000"/><rect x="1" y="7" width="1" height="1" fill="#fff"/><rect x="2" y="7" width="5" height="1" fill="#0000ff"/><rect x="7" y="7" width="1" height="1" fill="#ffff00"/><rect x="8" y="7" width="2" height="1" fill="#0000ff"/><rect x="10" y="7" width="2" height="1" fill="#ff0000"/><rect x="12" y="7" width="1" height="1" fill="#dfdfdf"/><rect x="13" y="7" width="1" height="1" fill="#000"/><rect x="0" y="8" width="1" height="1" fill="#000"/><rect x="1" y="8" width="1" height="1" fill="#fff"/><rect x="2" y="8" width="4" height="1" fill="#0000ff"/><rect x="6" y="8" width="1" height="1" fill="#ffff00"/><rect x="7" y="8" width="3" height="1" fill="#0000ff"/><rect x="10" y="8" width="2" height="1" fill="#ff0000"/><rect x="12" y="8" width="1" height="1" fill="#dfdfdf"/><rect x="13" y="8" width="1" height="1" fill="#000"/><rect x="0" y="9" width="1" height="1" fill="#000"/><rect x="1" y="9" width="1" height="1" fill="#fff"/><rect x="2" y="9" width="3" height="1" fill="#0000ff"/><rect x="5" y="9" width="1" height="1" fill="#ffff00"/><rect x="6" y="9" width="4" height="1" fill="#0000ff"/><rect x="10" y="9" width="2" height="1" fill="#ff0000"/><rect x="12" y="9" width="1" height="1" fill="#dfdfdf"/><rect x="13" y="9" width="1" height="1" fill="#000"/><rect x="0" y="10" width="1" height="1" fill="#000"/><rect x="1" y="10" width="3" height="1" fill="#fff"/><rect x="4" y="10" width="1" height="1" fill="#ffff00"/><rect x="5" y="10" width="4" height="1" fill="#fff"/><rect x="9" y="10" width="1" height="1" fill="#dfdfdf"/><rect x="10" y="10" width="2" height="1" fill="#ff0000"/><rect x="12" y="10" width="1" height="1" fill="#dfdfdf"/><rect x="13" y="10" width="1" height="1" fill="#000"/><rect x="1" y="11" width="2" height="1" fill="#000"/><rect x="3" y="11" width="1" height="1" fill="#ffff00"/><rect x="4" y="11" width="6" height="1" fill="#000"/><rect x="10" y="11" width="2" height="1" fill="#ff0000"/><rect x="12" y="11" width="1" height="1" fill="#000"/><rect x="2" y="12" width="1" height="1" fill="#ffff00"/><rect x="3" y="12" width="7" height="1" fill="#fff"/><rect x="10" y="12" width="2" height="1" fill="#ff0000"/><rect x="1" y="13" width="1" height="1" fill="#ffff00"/><rect x="2" y="13" width="9" height="1" fill="#000"/><rect x="11" y="13" width="1" height="1" fill="#ff0000"/><rect x="12" y="13" width="1" height="1" fill="#000"/></svg>
<svg class="abs" style="left:564px;top:458px" width="13" height="16" viewBox="0 0 13 16" shape-rendering="crispEdges"><rect x="5" y="0" width="2" height="1" fill="#0000ff"/><rect x="4" y="1" width="1" height="1" fill="#0000ff"/><rect x="5" y="1" width="2" height="1" fill="#fff"/><rect x="7" y="1" width="1" height="1" fill="#0000ff"/><rect x="0" y="2" width="4" height="1" fill="#0000ff"/><rect x="4" y="2" width="4" height="1" fill="#fff"/><rect x="8" y="2" width="4" height="1" fill="#0000ff"/><rect x="0" y="3" width="1" height="1" fill="#0000ff"/><rect x="1" y="3" width="2" height="1" fill="#dfdfdf"/><rect x="3" y="3" width="6" height="1" fill="#fff"/><rect x="9" y="3" width="2" height="1" fill="#dfdfdf"/><rect x="11" y="3" width="1" height="1" fill="#0000ff"/><rect x="12" y="3" width="1" height="1" fill="#000"/><rect x="0" y="4" width="1" height="1" fill="#0000ff"/><rect x="1" y="4" width="3" height="1" fill="#ff0000"/><rect x="4" y="4" width="4" height="1" fill="#fff"/><rect x="8" y="4" width="3" height="1" fill="#ff0000"/><rect x="11" y="4" width="1" height="1" fill="#0000ff"/><rect x="12" y="4" width="1" height="1" fill="#000"/><rect x="0" y="5" width="1" height="1" fill="#0000ff"/><rect x="1" y="5" width="4" height="1" fill="#ff0000"/><rect x="5" y="5" width="2" height="1" fill="#fff"/><rect x="7" y="5" width="4" height="1" fill="#ff0000"/><rect x="11" y="5" width="1" height="1" fill="#0000ff"/><rect x="12" y="5" width="1" height="1" fill="#000"/><rect x="0" y="6" width="1" height="1" fill="#0000ff"/><rect x="1" y="6" width="1" height="1" fill="#dfdfdf"/><rect x="2" y="6" width="3" height="1" fill="#ff0000"/><rect x="5" y="6" width="2" height="1" fill="#fff"/><rect x="7" y="6" width="3" height="1" fill="#ff0000"/><rect x="10" y="6" width="1" height="1" fill="#dfdfdf"/><rect x="11" y="6" width="1" height="1" fill="#0000ff"/><rect x="12" y="6" width="1" height="1" fill="#000"/><rect x="0" y="7" width="1" height="1" fill="#0000ff"/><rect x="1" y="7" width="2" height="1" fill="#dfdfdf"/><rect x="3" y="7" width="2" height="1" fill="#ff0000"/><rect x="5" y="7" width="2" height="1" fill="#fff"/><rect x="7" y="7" width="2" height="1" fill="#ff0000"/><rect x="9" y="7" width="2" height="1" fill="#dfdfdf"/><rect x="11" y="7" width="1" height="1" fill="#0000ff"/><rect x="12" y="7" width="1" height="1" fill="#000"/><rect x="0" y="8" width="1" height="1" fill="#0000ff"/><rect x="1" y="8" width="2" height="1" fill="#dfdfdf"/><rect x="3" y="8" width="6" height="1" fill="#ff0000"/><rect x="9" y="8" width="2" height="1" fill="#dfdfdf"/><rect x="11" y="8" width="1" height="1" fill="#0000ff"/><rect x="12" y="8" width="1" height="1" fill="#000"/><rect x="1" y="9" width="1" height="1" fill="#0000ff"/><rect x="2" y="9" width="2" height="1" fill="#dfdfdf"/><rect x="4" y="9" width="4" height="1" fill="#ff0000"/><rect x="8" y="9" width="2" height="1" fill="#dfdfdf"/><rect x="10" y="9" width="1" height="1" fill="#0000ff"/><rect x="11" y="9" width="1" height="1" fill="#000"/><rect x="1" y="10" width="1" height="1" fill="#0000ff"/><rect x="2" y="10" width="2" height="1" fill="#dfdfdf"/><rect x="4" y="10" width="4" height="1" fill="#ff0000"/><rect x="8" y="10" width="2" height="1" fill="#dfdfdf"/><rect x="10" y="10" width="1" height="1" fill="#0000ff"/><rect x="11" y="10" width="1" height="1" fill="#000"/><rect x="2" y="11" width="1" height="1" fill="#0000ff"/><rect x="3" y="11" width="2" height="1" fill="#dfdfdf"/><rect x="5" y="11" width="2" height="1" fill="#ff0000"/><rect x="7" y="11" width="2" height="1" fill="#dfdfdf"/><rect x="9" y="11" width="1" height="1" fill="#0000ff"/><rect x="10" y="11" width="1" height="1" fill="#000"/><rect x="2" y="12" width="1" height="1" fill="#0000ff"/><rect x="3" y="12" width="2" height="1" fill="#dfdfdf"/><rect x="5" y="12" width="2" height="1" fill="#ff0000"/><rect x="7" y="12" width="2" height="1" fill="#dfdfdf"/><rect x="9" y="12" width="1" height="1" fill="#0000ff"/><rect x="10" y="12" width="1" height="1" fill="#000"/><rect x="3" y="13" width="1" height="1" fill="#0000ff"/><rect x="4" y="13" width="1" height="1" fill="#dfdfdf"/><rect x="5" y="13" width="2" height="1" fill="#ff0000"/><rect x="7" y="13" width="1" height="1" fill="#dfdfdf"/><rect x="8" y="13" width="1" height="1" fill="#0000ff"/><rect x="9" y="13" width="1" height="1" fill="#000"/><rect x="4" y="14" width="1" height="1" fill="#0000ff"/><rect x="5" y="14" width="2" height="1" fill="#ff0000"/><rect x="7" y="14" width="1" height="1" fill="#0000ff"/><rect x="8" y="14" width="1" height="1" fill="#000"/><rect x="5" y="15" width="2" height="1" fill="#0000ff"/><rect x="7" y="15" width="1" height="1" fill="#000"/></svg>
<svg class="abs" style="left:578px;top:459px" width="17" height="15" viewBox="0 0 17 15" shape-rendering="crispEdges"><rect x="8" y="0" width="2" height="1" fill="#000"/><rect x="7" y="1" width="1" height="1" fill="#000"/><rect x="8" y="1" width="1" height="1" fill="#fff"/><rect x="9" y="1" width="1" height="1" fill="#000"/><rect x="6" y="2" width="1" height="1" fill="#000"/><rect x="7" y="2" width="1" height="1" fill="#ffff00"/><rect x="8" y="2" width="1" height="1" fill="#fff"/><rect x="9" y="2" width="1" height="1" fill="#000"/><rect x="15" y="2" width="1" height="1" fill="#808080"/><rect x="5" y="3" width="1" height="1" fill="#000"/><rect x="6" y="3" width="1" height="1" fill="#fff"/><rect x="7" y="3" width="1" height="1" fill="#ffff00"/><rect x="8" y="3" width="1" height="1" fill="#fff"/><rect x="9" y="3" width="1" height="1" fill="#000"/><rect x="14" y="3" width="1" height="1" fill="#808080"/><rect x="4" y="4" width="1" height="1" fill="#000"/><rect x="5" y="4" width="1" height="1" fill="#ffff00"/><rect x="6" y="4" width="1" height="1" fill="#fff"/><rect x="7" y="4" width="1" height="1" fill="#ffff00"/><rect x="8" y="4" width="1" height="1" fill="#fff"/><rect x="9" y="4" width="1" height="1" fill="#000"/><rect x="13" y="4" width="1" height="1" fill="#808080"/><rect x="1" y="5" width="3" height="1" fill="#000"/><rect x="4" y="5" width="1" height="1" fill="#fff"/><rect x="5" y="5" width="1" height="1" fill="#ffff00"/><rect x="6" y="5" width="1" height="1" fill="#fff"/><rect x="7" y="5" width="1" height="1" fill="#ffff00"/><rect x="8" y="5" width="1" height="1" fill="#fff"/><rect x="9" y="5" width="1" height="1" fill="#000"/><rect x="1" y="6" width="1" height="1" fill="#000"/><rect x="2" y="6" width="1" height="1" fill="#ffff00"/><rect x="3" y="6" width="1" height="1" fill="#fff"/><rect x="4" y="6" width="1" height="1" fill="#ffff00"/><rect x="5" y="6" width="1" height="1" fill="#fff"/><rect x="6" y="6" width="1" height="1" fill="#ffff00"/><rect x="7" y="6" width="1" height="1" fill="#fff"/><rect x="8" y="6" width="2" height="1" fill="#000"/><rect x="1" y="7" width="1" height="1" fill="#000"/><rect x="2" y="7" width="1" height="1" fill="#fff"/><rect x="3" y="7" width="1" height="1" fill="#ffff00"/><rect x="4" y="7" width="1" height="1" fill="#fff"/><rect x="5" y="7" width="1" height="1" fill="#ffff00"/><rect x="6" y="7" width="1" height="1" fill="#fff"/><rect x="7" y="7" width="1" height="1" fill="#ffff00"/><rect x="8" y="7" width="2" height="1" fill="#000"/><rect x="12" y="7" width="3" height="1" fill="#808080"/><rect x="1" y="8" width="1" height="1" fill="#000"/><rect x="2" y="8" width="1" height="1" fill="#ffff00"/><rect x="3" y="8" width="1" height="1" fill="#fff"/><rect x="4" y="8" width="1" height="1" fill="#ffff00"/><rect x="5" y="8" width="1" height="1" fill="#fff"/><rect x="6" y="8" width="1" height="1" fill="#ffff00"/><rect x="7" y="8" width="1" height="1" fill="#fff"/><rect x="8" y="8" width="2" height="1" fill="#000"/><rect x="1" y="9" width="3" height="1" fill="#000"/><rect x="4" y="9" width="1" height="1" fill="#fff"/><rect x="5" y="9" width="1" height="1" fill="#ffff00"/><rect x="6" y="9" width="1" height="1" fill="#fff"/><rect x="7" y="9" width="1" height="1" fill="#ffff00"/><rect x="8" y="9" width="1" height="1" fill="#fff"/><rect x="9" y="9" width="1" height="1" fill="#000"/><rect x="4" y="10" width="1" height="1" fill="#000"/><rect x="5" y="10" width="1" height="1" fill="#ffff00"/><rect x="6" y="10" width="1" height="1" fill="#fff"/><rect x="7" y="10" width="1" height="1" fill="#ffff00"/><rect x="8" y="10" width="1" height="1" fill="#fff"/><rect x="9" y="10" width="1" height="1" fill="#000"/><rect x="13" y="10" width="1" height="1" fill="#808080"/><rect x="5" y="11" width="1" height="1" fill="#000"/><rect x="6" y="11" width="1" height="1" fill="#fff"/><rect x="7" y="11" width="1" height="1" fill="#ffff00"/><rect x="8" y="11" width="1" height="1" fill="#fff"/><rect x="9" y="11" width="1" height="1" fill="#000"/><rect x="14" y="11" width="1" height="1" fill="#808080"/><rect x="6" y="12" width="1" height="1" fill="#000"/><rect x="7" y="12" width="1" height="1" fill="#ffff00"/><rect x="8" y="12" width="1" height="1" fill="#fff"/><rect x="9" y="12" width="1" height="1" fill="#000"/><rect x="15" y="12" width="1" height="1" fill="#808080"/><rect x="7" y="13" width="1" height="1" fill="#000"/><rect x="8" y="13" width="1" height="1" fill="#fff"/><rect x="9" y="13" width="1" height="1" fill="#000"/><rect x="8" y="14" width="2" height="1" fill="#000"/></svg>
<div class="lbl" style="left:603px;top:457px;letter-spacing:-0.6px;-webkit-text-stroke:0.3px #000">15.48</div>
</body>
</html>
